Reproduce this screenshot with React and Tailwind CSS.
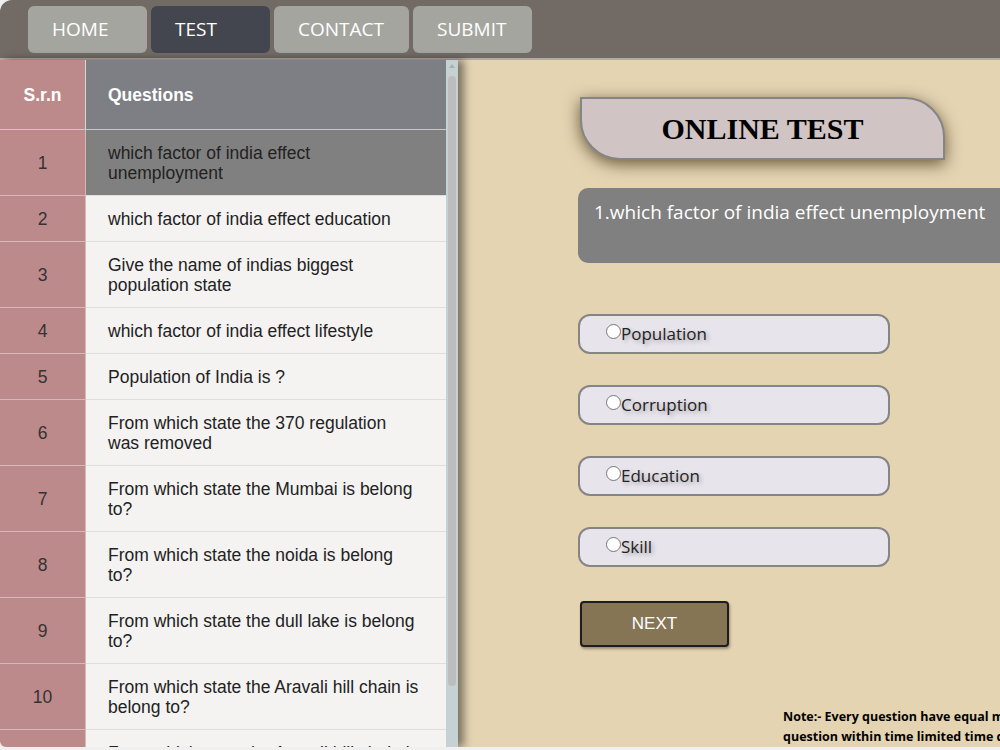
import React from "react";

const questions = [
  { n: 1, lines: ["which factor of india effect", "unemployment"], active: true },
  { n: 2, lines: ["which factor of india effect education"] },
  { n: 3, lines: ["Give the name of indias biggest", "population state"] },
  { n: 4, lines: ["which factor of india effect lifestyle"] },
  { n: 5, lines: ["Population of India is ?"] },
  { n: 6, lines: ["From which state the 370 regulation", "was removed"] },
  { n: 7, lines: ["From which state the Mumbai is belong", "to?"] },
  { n: 8, lines: ["From which state the noida is belong", "to?"] },
  { n: 9, lines: ["From which state the dull lake is belong", "to?"] },
  { n: 10, lines: ["From which state the Aravali hill chain is", "belong to?"] },
  { n: 11, lines: ["From which state the Aravali hill chain is", "belong to?"] },
];

const options = ["Population", "Corruption", "Education", "Skill"];

const navItems = [
  { label: "HOME", w: "w-[119px]", bg: "bg-[#a5a59f]" },
  { label: "TEST", w: "w-[119px]", bg: "bg-[#43464e]" },
  { label: "CONTACT", w: "w-[135px]", bg: "bg-[#a5a59f]" },
  { label: "SUBMIT", w: "w-[119px]", bg: "bg-[#a5a59f]" },
];

function QuestionTable() {
  return (
    <div className="flex h-full shrink-0 shadow-[6px_0_8px_rgba(0,0,0,0.45)] z-10">
      <div className="w-[446px] h-full overflow-hidden font-['Liberation_Sans',Arial,sans-serif] text-[17.5px] leading-[20px]">
        {/* header */}
        <div className="flex h-[70px] border-b border-[#c9c9c9] text-white font-bold">
          <div className="w-[86px] bg-[#bd8a8b] flex items-center justify-center border-r border-[#d8d8d8]">S.r.n</div>
          <div className="flex-1 bg-[#7e7f85] flex items-center pl-[22px]">Questions</div>
        </div>
        {questions.map((q) => (
          <div key={q.n} className="flex">
            <div className="w-[86px] bg-[#bd8a8b] border-b border-r border-[#d8b9b9] text-[#333] flex items-center justify-center">
              {q.n}
            </div>
            <div
              className={`flex-1 pl-[22px] pt-[13px] pb-[12px] border-b border-[#dedede] text-[#222] ${
                q.active ? "bg-[#808080]" : "bg-[#f4f3f2]"
              }`}
            >
              {q.lines.map((l, i) => (
                <div key={i} className="whitespace-nowrap">{l}</div>
              ))}
            </div>
          </div>
        ))}
      </div>
      {/* scrollbar */}
      <div className="w-[12px] h-full bg-[#c6d1d3] flex flex-col items-center pt-[4px]">
        <div className="w-0 h-0 border-l-[3px] border-r-[3px] border-b-[4px] border-l-transparent border-r-transparent border-b-[#a9b0b2]" />
        <div className="mt-[8px] w-[8px] h-[610px] rounded-full bg-[#bdbdbd]" />
      </div>
    </div>
  );
}

export default function App() {
  return (
    <div className="w-[1000px] h-[750px] bg-[#f0f0f0] overflow-hidden">
      <div className="w-[1000px] h-[747px] rounded-tl-[12px] rounded-bl-[6px] overflow-hidden flex flex-col">
        {/* nav */}
        <nav className="h-[60px] shrink-0 bg-[#716a65] border-b-2 border-[#b3aaa1] flex items-start pl-[28px] pt-[6px] gap-[4px] font-['Open_Sans','Noto_Sans',sans-serif]">
          {navItems.map((item) => (
            <div
              key={item.label}
              className={`${item.w} ${item.bg} h-[47px] rounded-[6px] pl-[24px] flex items-center text-white text-[19px]`}
            >
              {item.label}
            </div>
          ))}
        </nav>

        <div className="flex flex-1 min-h-0">
          <QuestionTable />

          {/* test area */}
          <div className="flex-1 bg-[#e4d4b2] pl-[120px] pt-[37px] font-['Open_Sans','Noto_Sans',sans-serif]">
            <div className="ml-[2px] w-[365px] h-[63px] bg-[#d1c4c5] border-2 border-[#858585] rounded-tr-[40px] rounded-bl-[40px] shadow-[0_4px_16px_rgba(50,35,10,0.7)] flex items-center justify-center">
              <h1 className="font-['Liberation_Serif','Times_New_Roman',serif] font-bold text-[30px] text-black">
                ONLINE TEST
              </h1>
            </div>

            <div className="mt-[28px] w-[450px] h-[75px] bg-[#808080] rounded-[10px] pl-[16px] pt-[10px] text-white text-[19px] whitespace-nowrap">
              1.which factor of india effect unemployment
            </div>

            <div className="mt-[51px] flex flex-col gap-[31px]">
              {options.map((o) => (
                <label
                  key={o}
                  className="w-[312px] h-[40px] bg-[#e7e4eb] border-2 border-[#858585] rounded-[12px] pl-[26px] flex items-center text-[17px] text-[#222] [text-shadow:2px_2px_4px_rgba(0,0,0,0.3)]"
                >
                  <span className="w-[15px] h-[15px] rounded-full bg-white border border-[#777] -mt-[6px] shrink-0" />
                  <span>{o}</span>
                </label>
              ))}
            </div>

            <button className="mt-[34px] ml-[2px] w-[149px] h-[46px] bg-[#857554] border-2 border-[#1d1d1d] rounded-[4px] text-white text-[17px] font-['Liberation_Sans',Arial,sans-serif] shadow-[1px_2px_3px_rgba(0,0,0,0.35)]">
              NEXT
            </button>

            <p className="mt-[60px] ml-[205px] w-[400px] text-[12.5px] leading-[20px] font-bold text-black whitespace-nowrap">
              Note:- Every question have equal marks. Attempt every
              <br />
              question within time limited time duration.
            </p>
          </div>
        </div>
      </div>
    </div>
  );
}
